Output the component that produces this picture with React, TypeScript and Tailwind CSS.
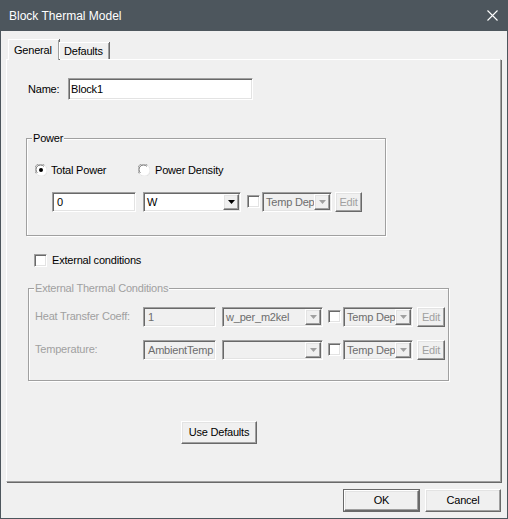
import React from "react";

const font = "font-['Liberation_Sans',Arial,sans-serif]";

// classic 3D edges
const sunken =
  "border border-t-[#a0a0a0] border-l-[#a0a0a0] border-r-white border-b-white shadow-[inset_1px_1px_0_#696969,inset_-1px_-1px_0_#e3e3e3]";
const raised =
  "border border-t-white border-l-white border-r-[#696969] border-b-[#696969] shadow-[inset_-1px_-1px_0_#a0a0a0,inset_1px_1px_0_#e3e3e3]";
const etched = "border border-[#a0a0a0] shadow-[1px_1px_0_#fff,inset_1px_1px_0_#fff]";

function Arrow({ disabled }: { disabled?: boolean }) {
  return (
    <span className={`flex h-full w-[16px] shrink-0 items-center justify-center bg-[#f0f0f0] ${raised}`}>
      <svg width="7" height="4" viewBox="0 0 7 4">
        <path d="M0 0h7L3.5 4z" fill={disabled ? "#a0a0a0" : "#000"} />
      </svg>
    </span>
  );
}

function Combo({ value, width, disabled }: { value: string; width: string; disabled?: boolean }) {
  return (
    <div className={`flex h-[20px] shrink-0 items-stretch p-px ${width} ${sunken} ${disabled ? "bg-[#f0f0f0]" : "bg-white"}`}>
      <span
        className={`flex-1 overflow-hidden whitespace-nowrap pl-[2px] leading-[16px] ${
          disabled ? "text-[#6d6d6d]" : "text-black"
        }`}
      >
        {value}
      </span>
      <Arrow disabled={disabled} />
    </div>
  );
}

function Field({ value, width, disabled }: { value: string; width: string; disabled?: boolean }) {
  return (
    <div
      className={`h-[20px] shrink-0 overflow-hidden whitespace-nowrap pl-[4px] leading-[18px] ${width} ${sunken} ${
        disabled ? "bg-[#f0f0f0] text-[#6d6d6d]" : "bg-white text-black"
      }`}
    >
      {value}
    </div>
  );
}

function Check() {
  return <span className={`block h-[13px] w-[13px] shrink-0 bg-white ${sunken}`} />;
}

function Radio({ checked }: { checked?: boolean }) {
  return (
    <svg width="12" height="12" viewBox="0 0 12 12" className="shrink-0">
      <circle cx="6" cy="6" r="5.5" fill="#fff" />
      <path d="M1.3 9.5A5.5 5.5 0 0 1 9.5 1.3" fill="none" stroke="#a0a0a0" strokeWidth="1" />
      <path d="M2.3 8.8A4.3 4.3 0 0 1 8.8 2.3" fill="none" stroke="#696969" strokeWidth="1" />
      <path d="M10.7 2.5A5.5 5.5 0 0 1 2.5 10.7" fill="none" stroke="#e3e3e3" strokeWidth="1" />
      {checked && <circle cx="6" cy="6" r="2" fill="#000" />}
    </svg>
  );
}

function TempDep() {
  return (
    <>
      <Check />
      <Combo value="Temp Dep" width="w-[70px]" disabled />
    </>
  );
}

function EditButton({ width }: { width: string }) {
  return (
    <div className={`h-[20px] shrink-0 bg-[#f0f0f0] text-center leading-[18px] text-[#a0a0a0] ${width} ${raised}`}>
      Edit
    </div>
  );
}

export default function App() {
  return (
    <div
      className={`flex h-[519px] w-[508px] flex-col border-x border-b border-[#4d565d] bg-[#f0f0f0] text-[11px] tracking-[-0.2px] ${font}`}
    >
      <header className="flex h-[31px] shrink-0 items-center justify-between bg-[#4d565d] pl-[8px] pr-[9px] tracking-normal text-white">
        <span className="text-[12px]">Block Thermal Model</span>
        <svg width="11" height="11" viewBox="0 0 11 11">
          <path d="M0.5 0.5l10 10M10.5 0.5l-10 10" stroke="#fff" strokeWidth="1.1" />
        </svg>
      </header>

      <div className="flex flex-1 flex-col pl-[5px] pr-[6px]">
        {/* tabs */}
        <div className="relative z-10 flex h-[28px] items-end pl-[2px]">
          <div className="mb-[-1px] h-[21px] w-[51px] border-l border-t border-white bg-[#f0f0f0] pl-[5px] pt-[2px] shadow-[1px_0_0_#696969,inset_-1px_0_0_#a0a0a0]">
            General
          </div>
          <div className="h-[17px] w-[50px] border-l border-t border-white pl-[4px] shadow-[1px_0_0_#696969,inset_-1px_0_0_#a0a0a0]">
            Defaults
          </div>
        </div>

        {/* tab page */}
        <div className="flex h-[423px] flex-col border-b border-l border-r border-t border-white border-b-[#a0a0a0] border-r-[#a0a0a0] shadow-[1px_1px_0_#696969]">
          <div className="ml-[21px] mt-[18px] flex items-center">
            <span className="w-[40px] text-black">Name:</span>
            <div className={`h-[22px] w-[185px] bg-white pl-[2px] leading-[20px] text-black ${sunken}`}>Block1</div>
          </div>

          <fieldset className={`ml-[19px] mt-[32px] h-[104px] w-[360px] ${etched}`}>
            <legend className="ml-[5px] bg-[#f0f0f0] px-[1px] leading-[13px] text-black">Power</legend>
            <div className="mt-[17px] flex items-center pl-[8px] text-black">
              <Radio checked />
              <span className="ml-[4px] w-[87px]">Total Power</span>
              <Radio />
              <span className="ml-[5px]">Power Density</span>
            </div>
            <div className="mt-[13px] flex items-center pl-[25px]">
              <Field value="0" width="w-[84px]" />
              <div className="ml-[7px]">
                <Combo value="W" width="w-[98px]" />
              </div>
              <div className="ml-[6px] flex items-center gap-[2px]">
                <TempDep />
              </div>
              <div className="ml-[3px]">
                <EditButton width="w-[27px]" />
              </div>
            </div>
          </fieldset>

          <div className="ml-[27px] mt-[16px] flex items-center text-black">
            <Check />
            <span className="ml-[5px]">External conditions</span>
          </div>

          <fieldset className={`ml-[21px] mt-[13px] h-[99px] w-[421px] text-[#a0a0a0] ${etched}`}>
            <legend className="ml-[5px] bg-[#f0f0f0] px-[1px] leading-[13px]">External Thermal Conditions</legend>
            <div className="mt-[12px] flex items-center pl-[6px]">
              <span className="w-[108px]">Heat Transfer Coeff:</span>
              <Field value="1" width="w-[73px]" disabled />
              <div className="ml-[6px]">
                <Combo value="w_per_m2kel" width="w-[101px]" disabled />
              </div>
              <div className="ml-[5px] flex items-center gap-[2px]">
                <TempDep />
              </div>
              <div className="ml-[4px]">
                <EditButton width="w-[28px]" />
              </div>
            </div>
            <div className="mt-[13px] flex items-center pl-[6px]">
              <span className="w-[108px]">Temperature:</span>
              <Field value="AmbientTemp" width="w-[73px]" disabled />
              <div className="ml-[6px]">
                <Combo value="" width="w-[101px]" disabled />
              </div>
              <div className="ml-[5px] flex items-center gap-[2px]">
                <TempDep />
              </div>
              <div className="ml-[4px]">
                <EditButton width="w-[28px]" />
              </div>
            </div>
          </fieldset>

          <button className={`ml-[174px] mt-[40px] h-[23px] w-[76px] bg-[#f0f0f0] text-black ${raised}`}>Use Defaults</button>
        </div>

        {/* dialog buttons */}
        <div className="mt-[7px] flex justify-end gap-[5px]">
          <div className="h-[23px] w-[77px] border border-[#696969]">
            <button className={`h-full w-full bg-[#f0f0f0] text-black ${raised}`}>OK</button>
          </div>
          <button className={`h-[23px] w-[76px] bg-[#f0f0f0] text-black ${raised}`}>Cancel</button>
        </div>
      </div>
    </div>
  );
}
